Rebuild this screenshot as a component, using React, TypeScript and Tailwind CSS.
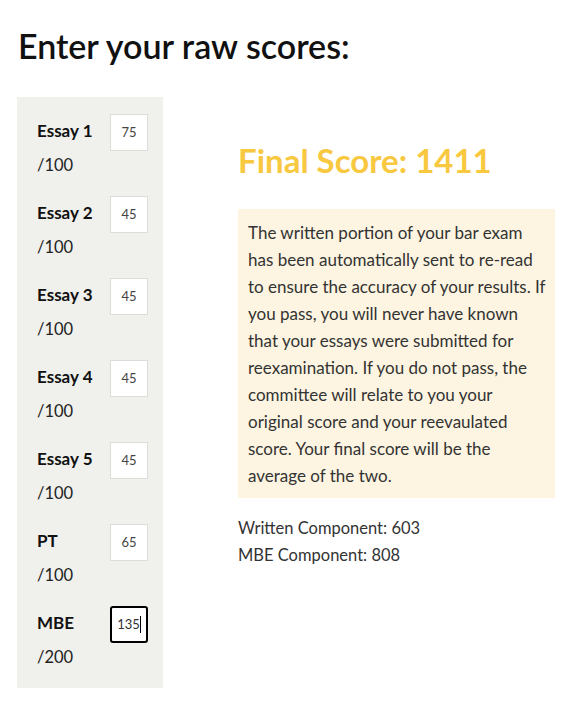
import React from "react";

const rows = [
  { label: "Essay 1", value: "75", max: "/100" },
  { label: "Essay 2", value: "45", max: "/100" },
  { label: "Essay 3", value: "45", max: "/100" },
  { label: "Essay 4", value: "45", max: "/100" },
  { label: "Essay 5", value: "45", max: "/100" },
  { label: "PT", value: "65", max: "/100" },
  { label: "MBE", value: "135", max: "/200", focused: true },
];

const lines = [
  "The written portion of your bar exam",
  "has been automatically sent to re-read",
  "to ensure the accuracy of your results. If",
  "you pass, you will never have known",
  "that your essays were submitted for",
  "reexamination. If you do not pass, the",
  "committee will relate to you your",
  "original score and your reevaulated",
  "score. Your final score will be the",
  "average of the two.",
];

export default function App() {
  return (
    <div
      className="w-[577px] h-[711px] bg-white text-[#333]"
      style={{ fontFamily: "Lato, 'Open Sans', sans-serif" }}
    >
      <h1 className="pl-[18px] pt-[26px] text-[34px] leading-[40px] font-semibold text-[#111] tracking-[0px]">
        Enter your raw scores:
      </h1>
      <div className="flex mt-[31px]">
        <div className="ml-[17px] w-[146px] bg-[#f0f0ec] pt-[17px] pb-[17px] pl-[20px] pr-[15px] flex flex-col gap-[17px]">
          {rows.map((r) => (
            <div key={r.label} className="flex flex-col">
              <div className="flex items-center justify-between h-[37px]">
                <span className="text-[17px] leading-[20px] font-bold text-[#111] -mt-[3px]">{r.label}</span>
                <div
                  className={
                    r.focused
                      ? "w-[38px] h-[37px] bg-white border-2 border-black rounded-[3px] flex items-center justify-center text-[13px] text-[#333]"
                      : "w-[38px] h-[37px] bg-white border border-[#dcdcd8] flex items-center justify-center text-[13px] text-[#444]"
                  }
                >
                  {r.value}
                  {r.focused && <span className="inline-block w-px h-[17px] bg-black" />}
                </div>
              </div>
              <div className="text-[16.5px] leading-[28px] text-[#222]">{r.max}</div>
            </div>
          ))}
        </div>
        <div className="ml-[75px] w-[317px] flex flex-col">
          <div className="mt-[43px] text-[33px] leading-[40px] font-bold text-[#f8c840]">
            Final Score: 1411
          </div>
          <div className="mt-[29px] bg-[#fdf5e1] pt-[10px] pb-[9px] px-[10px] text-[17px] leading-[27px] text-[#333]">
            {lines.map((l) => (
              <span key={l} className="block whitespace-nowrap">
                {l}
              </span>
            ))}
          </div>
          <div className="mt-[17px] text-[16.5px] leading-[27px] text-[#333]">
            <div>Written Component: 603</div>
            <div>MBE Component: 808</div>
          </div>
        </div>
      </div>
    </div>
  );
}
